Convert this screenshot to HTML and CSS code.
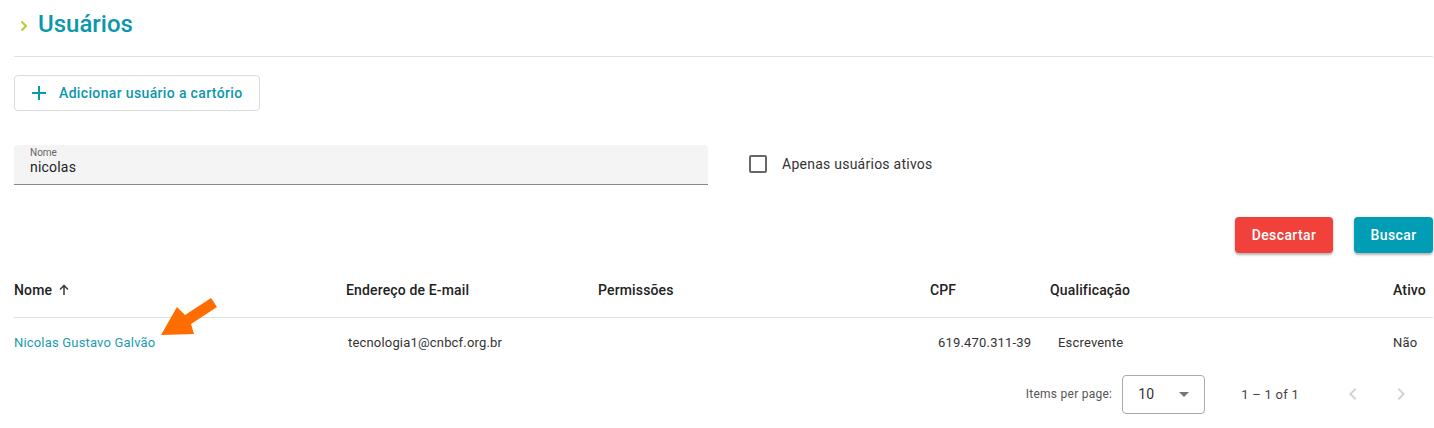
FILE: index.html
```html
<!DOCTYPE html>
<html lang="pt-BR">
<head>
<meta charset="utf-8">
<title>Usuários</title>
<link rel="stylesheet" href="styles.css">
</head>
<body>
<div class="page">
  <header class="page-header">
    <svg class="crumb" width="8" height="12" viewBox="0 0 8 12"><path d="M1.5 1.5 L6 6 L1.5 10.5" fill="none" stroke="#b9cc2c" stroke-width="2"/></svg>
    <h1 class="title">Usuários</h1>
  </header>

  <div class="actions">
    <button class="btn-outline">
      <svg width="16" height="16" viewBox="0 0 16 16"><path d="M8 1v14M1 8h14" stroke="#0b97ac" stroke-width="2"/></svg>
      <span>Adicionar usuário a cartório</span>
    </button>
  </div>

  <div class="filters">
    <div class="field">
      <label class="field-label">Nome</label>
      <div class="field-value">nicolas</div>
    </div>
    <label class="check">
      <span class="box"></span>
      <span>Apenas usuários ativos</span>
    </label>
  </div>

  <div class="buttons">
    <button class="btn btn-red">Descartar</button>
    <button class="btn btn-teal">Buscar</button>
  </div>

  <div class="table">
    <div class="row head">
      <div class="cell">Nome <svg class="sort" width="12" height="12" viewBox="0 0 12 12"><path d="M6 11V2M2 5.5L6 1.5L10 5.5" fill="none" stroke="#444" stroke-width="1.6"/></svg></div>
      <div class="cell">Endereço de E-mail</div>
      <div class="cell">Permissões</div>
      <div class="cell">CPF</div>
      <div class="cell">Qualificação</div>
      <div class="cell">Ativo</div>
    </div>
    <div class="row data">
      <div class="cell link">Nicolas Gustavo Galvão</div>
      <div class="cell pad2">tecnologia1@cnbcf.org.br</div>
      <div class="cell"></div>
      <div class="cell pad8">619.470.311-39</div>
      <div class="cell pad8">Escrevente</div>
      <div class="cell">Não</div>
    </div>
  </div>

  <div class="paginator">
    <span class="ipp">Items per page:</span>
    <div class="select">
      <span>10</span>
      <svg width="10" height="5" viewBox="0 0 10 5"><path d="M0 0h10L5 5z" fill="#757575"/></svg>
    </div>
    <span class="range">1 – 1 of 1</span>
    <span class="nav">
      <svg width="24" height="24" viewBox="0 0 24 24"><path d="M15.4 7.4L14 6l-6 6 6 6 1.4-1.4L10.8 12z" fill="#d3d3d3"/></svg>
    </span>
    <span class="nav">
      <svg width="24" height="24" viewBox="0 0 24 24"><path d="M10 6L8.6 7.4 13.2 12l-4.6 4.6L10 18l6-6z" fill="#d3d3d3"/></svg>
    </span>
  </div>

  <svg class="pointer" width="1434" height="428" viewBox="0 0 1434 428">
    <polygon points="161,335 177,307 185,315 211,298 217,307 191,324 194,334" fill="#ff6d00"/>
  </svg>
</div>
</body>
</html>
```

FILE: styles.css
```css
* { box-sizing: border-box; }
html, body { margin: 0; padding: 0; background: #fff; }
body {
  font-family: Roboto, "Liberation Sans", Arial, sans-serif;
  color: #333;
  width: 1434px;
  height: 428px;
  overflow: hidden;
}
.page {
  position: relative;
  padding: 0 1px 0 14px;
}
.page-header {
  display: flex;
  align-items: center;
  height: 57px;
  padding-top: 0;
  border-bottom: 1px solid #e0e0e0;
  padding-bottom: 9px;
}
.crumb { margin-left: 6px; margin-right: 10px; margin-top: 4px; }
.title {
  margin: 0;
  font-size: 24px;
  font-weight: 500;
  color: #0b97ac;
  line-height: 28px;
}
.actions { padding-top: 18px; }
.btn-outline {
  display: flex;
  align-items: center;
  gap: 12px;
  height: 36px;
  width: 246px;
  padding: 0 0 0 16px;
  background: #fff;
  border: 1px solid #dcdcdc;
  border-radius: 4px;
  font-family: inherit;
  font-size: 14px;
  font-weight: 500;
  color: #0b97ac;
  letter-spacing: 0.35px;
  white-space: nowrap;
}
.filters {
  display: flex;
  align-items: center;
  margin-top: 34px;
  gap: 41px;
}
.field {
  width: 694px;
  height: 40px;
  background: #f4f4f4;
  border-bottom: 1px solid #8a8a8a;
  border-radius: 4px 4px 0 0;
  padding: 2px 16px 0;
}
.field-label {
  display: block;
  font-size: 10px;
  line-height: 11px;
  color: #666;
}
.field-value {
  font-size: 14px;
  line-height: 18px;
  color: #222;
  letter-spacing: 0.2px;
}
.check {
  display: flex;
  align-items: center;
  gap: 15px;
  font-size: 14px;
  color: #333;
  margin-top: -2px;
  letter-spacing: 0.25px;
}
.box {
  width: 18px;
  height: 18px;
  border: 2px solid #666;
  border-radius: 2px;
}
.buttons {
  display: flex;
  justify-content: flex-end;
  gap: 21px;
  margin-top: 32px;
}
.btn {
  height: 36px;
  border: 0;
  border-radius: 4px;
  font-family: inherit;
  font-size: 14px;
  font-weight: 500;
  color: #fff;
  padding: 0;
  letter-spacing: 0.4px;
  box-shadow: 0 2px 2px rgba(0,0,0,0.22), 0 1px 4px rgba(0,0,0,0.12);
}
.btn-red { background: #f0413a; width: 98px; }
.btn-teal { background: #009db5; width: 79px; }
.table { margin-top: 9px; }
.row {
  display: grid;
  grid-template-columns: 332px 252px 332px 120px 343px 1fr;
  align-items: center;
}
.row.head {
  height: 56px;
  border-bottom: 1px solid #e0e0e0;
  font-size: 14px;
  font-weight: 500;
  color: #222;
  letter-spacing: 0.15px;
}
.row.data {
  height: 48px;
  font-size: 13px;
  color: #333;
  letter-spacing: 0.18px;
}
.cell { display: flex; align-items: center; }
.sort { margin-left: 6px; }
.link { color: #1c9bb0; }
.pad2 { padding-left: 2px; }
.pad8 { padding-left: 8px; }
.paginator {
  display: flex;
  align-items: center;
  justify-content: flex-end;
  height: 56px;
  padding-right: 8px;
  font-size: 12px;
  color: #555;
  letter-spacing: 0.25px;
}
.ipp { margin-right: 10px; }
.select {
  display: flex;
  align-items: center;
  justify-content: space-between;
  width: 83px;
  height: 39px;
  border: 1px solid #aaa;
  border-radius: 4px;
  padding: 0 15px 0 15px;
  font-size: 14px;
  color: #333;
  margin-right: 36px;
}
.range { font-size: 13px; color: #444; margin-right: 30px; }
.nav { display: flex; width: 48px; justify-content: center; }
.pointer {
  position: absolute;
  left: 0;
  top: 0;
  pointer-events: none;
}
```
